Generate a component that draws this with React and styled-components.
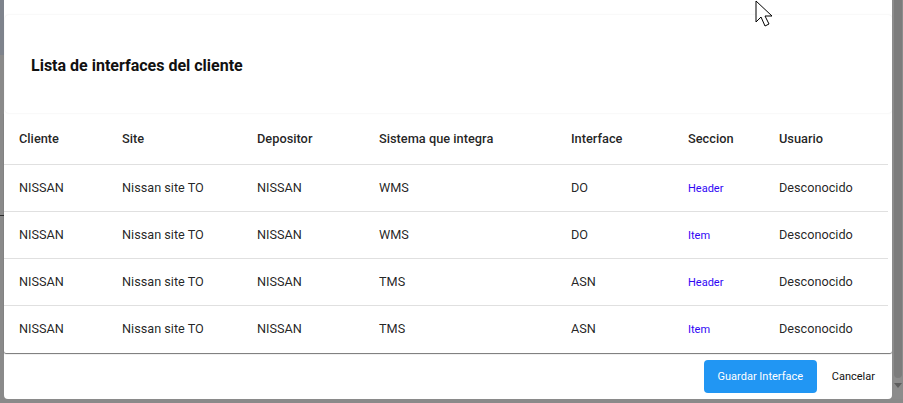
import React from "react";
import styled, { createGlobalStyle } from "styled-components";

const GlobalStyle = createGlobalStyle`
  html, body {
    margin: 0;
    padding: 0;
    height: 100%;
    overflow: hidden;
  }
  body {
    font-family: Roboto, "Liberation Sans", Arial, sans-serif;
    background: linear-gradient(
      to bottom,
      #7e838c 0px,
      #7e838c 55px,
      #8a8a8a 55px,
      #8a8a8a 215px,
      #2c2c2c 215px,
      #2c2c2c 216px,
      #8a8a8a 216px
    );
  }
`;

const Screen = styled.div`
  position: relative;
  display: flex;
  flex-flow: row nowrap;
  align-items: flex-start;
  height: 403px;
  width: 903px;
`;

const Modal = styled.div`
  margin-left: 4px;
  width: 888px;
  height: 399px;
  background-color: #fff;
  border-radius: 0 0 4px 4px;
  display: flex;
  flex-flow: column nowrap;
  padding-top: 15px;
  box-sizing: border-box;
`;

const TitleCard = styled.div`
  margin: 0 0 0 1px;
  height: 98px;
  border-radius: 4px;
  box-shadow: 0 0 2px rgba(0, 0, 0, 0.1);
  display: flex;
  align-items: center;
  padding-left: 26px;
  box-sizing: border-box;
`;

const Title = styled.h2`
  margin: 2px 0 0 0;
  font-size: 16px;
  font-weight: 700;
  color: #111;
`;

const TablePaper = styled.div`
  box-shadow: 0 1px 1px rgba(0, 0, 0, 0.55);
  border-radius: 0 0 2px 2px;
`;

const Table = styled.table`
  width: 884px;
  border-collapse: collapse;
  table-layout: fixed;
`;

const HeadCell = styled.th`
  height: 51px;
  padding: 0 0 0 15px;
  text-align: left;
  font-size: 12.8px;
  font-weight: 500;
  color: rgba(0, 0, 0, 0.87);
  border-bottom: 1px solid #e0e0e0;
`;

const Row = styled.tr`
  height: 47px;
  border-bottom: ${(p) => (p.last ? "none" : "1px solid #e0e0e0")};
`;

const Cell = styled.td`
  padding: 0 0 1px 15px;
  font-size: 12.7px;
  color: rgba(0, 0, 0, 0.87);
  white-space: nowrap;
`;

const SectionLink = styled.span`
  font-size: 11px;
  color: #2f06f5;
`;

const Footer = styled.div`
  flex: 1;
  display: flex;
  flex-flow: row nowrap;
  justify-content: flex-end;
  align-items: center;
  gap: 15px;
  padding: 2px 17px 0 0;
`;

const PrimaryButton = styled.button`
  height: 33px;
  width: 113px;
  border: none;
  border-radius: 4px;
  background-color: #2196f3;
  color: #fff;
  font-family: inherit;
  font-size: 11px;
  padding: 0;
`;

const TextButton = styled.button`
  border: none;
  background: none;
  font-family: inherit;
  font-size: 11px;
  color: #111;
  padding: 0;
`;

const Scrollbar = styled.div`
  width: 11px;
  height: 399px;
  background-color: #8c8c8c;
  display: flex;
  flex-flow: column nowrap;
  align-items: center;
`;

const Thumb = styled.div`
  width: 8px;
  height: 378px;
  border-radius: 0 0 4px 4px;
  background-color: #7c7c7c;
`;

const Arrow = styled.div`
  margin-top: 5px;
  width: 0;
  height: 0;
  border-left: 4px solid transparent;
  border-right: 4px solid transparent;
  border-top: 5px solid #5e5e5e;
`;

const Cursor = styled.svg`
  position: absolute;
  left: 755px;
  top: 0;
`;

const columns = [
  { label: "Cliente", width: 103 },
  { label: "Site", width: 135 },
  { label: "Depositor", width: 122 },
  { label: "Sistema que integra", width: 192 },
  { label: "Interface", width: 117 },
  { label: "Seccion", width: 91 },
  { label: "Usuario", width: 124 },
];

const rows = [
  { sistema: "WMS", interfaz: "DO", seccion: "Header" },
  { sistema: "WMS", interfaz: "DO", seccion: "Item" },
  { sistema: "TMS", interfaz: "ASN", seccion: "Header" },
  { sistema: "TMS", interfaz: "ASN", seccion: "Item" },
];

export default function App() {
  return (
    <>
      <GlobalStyle />
      <Screen>
        <Modal>
          <TitleCard>
            <Title>Lista de interfaces del cliente</Title>
          </TitleCard>
          <TablePaper>
            <Table>
              <colgroup>
                {columns.map((c) => (
                  <col key={c.label} style={{ width: c.width }} />
                ))}
              </colgroup>
              <thead>
                <tr>
                  {columns.map((c) => (
                    <HeadCell key={c.label}>{c.label}</HeadCell>
                  ))}
                </tr>
              </thead>
              <tbody>
                {rows.map((r, i) => (
                  <Row key={i} last={i === rows.length - 1}>
                    <Cell>NISSAN</Cell>
                    <Cell>Nissan site TO</Cell>
                    <Cell>NISSAN</Cell>
                    <Cell>{r.sistema}</Cell>
                    <Cell>{r.interfaz}</Cell>
                    <Cell>
                      <SectionLink>{r.seccion}</SectionLink>
                    </Cell>
                    <Cell>Desconocido</Cell>
                  </Row>
                ))}
              </tbody>
            </Table>
          </TablePaper>
          <Footer>
            <PrimaryButton>Guardar Interface</PrimaryButton>
            <TextButton>Cancelar</TextButton>
          </Footer>
        </Modal>
        <Scrollbar>
          <Thumb />
          <Arrow />
        </Scrollbar>
        <Cursor width="22" height="30" viewBox="0 0 22 30">
          <path
            d="M1 1 L1 22 L6 17 L10 26 L14 24 L10 16 L17 16 Z"
            fill="#fff"
            stroke="#000"
            strokeWidth="1"
            strokeLinejoin="round"
          />
        </Cursor>
      </Screen>
    </>
  );
}
